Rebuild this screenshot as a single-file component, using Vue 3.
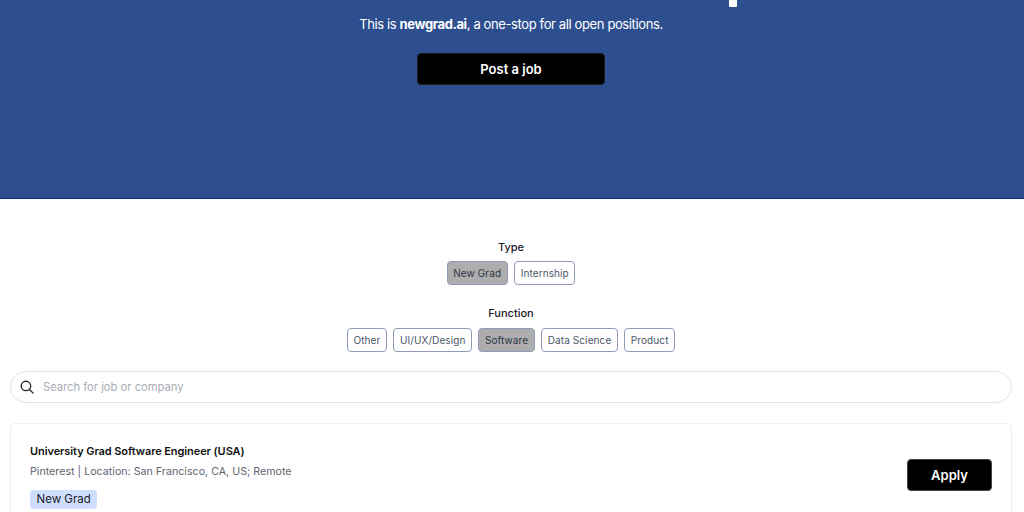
<script setup>
const types = [
  { label: 'New Grad', active: true },
  { label: 'Internship', active: false },
]
const functions = [
  { label: 'Other', active: false },
  { label: 'UI/UX/Design', active: false },
  { label: 'Software', active: true },
  { label: 'Data Science', active: false },
  { label: 'Product', active: false },
]
</script>

<template>
  <div class="page">
    <header class="hero">
      <div class="cursor"></div>
      <p class="intro">This is <b>newgrad.ai</b>, a one-stop for all open positions.</p>
      <button class="post">Post a job</button>
    </header>
    <main class="content">
      <section class="filter">
        <h3>Type</h3>
        <div class="chips">
          <span v-for="t in types" :key="t.label" class="chip" :class="{ active: t.active }">{{ t.label }}</span>
        </div>
      </section>
      <section class="filter second">
        <h3>Function</h3>
        <div class="chips">
          <span v-for="f in functions" :key="f.label" class="chip" :class="{ active: f.active }">{{ f.label }}</span>
        </div>
      </section>
      <div class="search">
        <svg width="14" height="14" viewBox="0 0 16 16" fill="none" stroke="#222" stroke-width="1.5" stroke-linecap="round">
          <circle cx="6.8" cy="6.8" r="5.4" />
          <path d="M10.8 10.8 15 15" />
        </svg>
        <span class="placeholder">Search for job or company</span>
      </div>
      <article class="card">
        <div class="info">
          <div class="title">University Grad Software Engineer (USA)</div>
          <div class="meta">Pinterest | Location: San Francisco, CA, US; Remote</div>
          <span class="tag">New Grad</span>
        </div>
        <button class="apply">Apply</button>
      </article>
    </main>
  </div>
</template>

<style>
html, body { margin: 0; height: 100%; overflow: hidden; background: #fff; }
</style>

<style scoped>
.page {
  width: 1024px;
  height: 512px;
  overflow: hidden;
  font-family: Inter, "Liberation Sans", sans-serif;
}
.hero {
  box-sizing: border-box;
  height: 199px;
  padding-right: 2px;
  background: #2d4f8f;
  border-bottom: 1px solid #0b2a86;
  display: flex;
  flex-direction: column;
  align-items: center;
  position: relative;
  color: #fff;
}
.cursor {
  position: absolute;
  left: 729px;
  top: 0;
  width: 8px;
  height: 7px;
  background: #fff;
  border-radius: 0 0 1px 1px;
}
.intro {
  margin: 16px 0 0;
  font-size: 13px;
  line-height: 17px;
  letter-spacing: -0.38px;
}
.intro b { font-weight: 700; }
.post {
  margin-top: 20px;
  width: 188px;
  height: 32px;
  background: #000;
  color: #fff;
  border: 1px solid #1c1c1c;
  border-radius: 4px;
  font: 600 13px Inter, "Liberation Sans", sans-serif;
  padding: 0;
}
.content { padding: 0 12px 0 10px; }
.filter {
  margin-top: 41px;
  display: flex;
  flex-direction: column;
  align-items: center;
}
.filter.second { margin-top: 21px; }
.filter.second h3 { margin-bottom: 8px; }
h3 {
  margin: 0 0 7px;
  font-size: 11px;
  line-height: 14px;
  font-weight: 500;
  color: #1a202c;
}
.chips { display: flex; gap: 6.5px; }
.chip {
  box-sizing: border-box;
  height: 24px;
  padding: 0 5.5px;
  display: flex;
  align-items: center;
  border: 1px solid #8f9cb8;
  border-radius: 4px;
  font-size: 10px;
  letter-spacing: 0.1px;
  color: #4a5568;
  background: #fff;
}
.chip.active { background: #adadad; color: #2d3748; }
.search {
  box-sizing: border-box;
  margin-top: 19px;
  height: 32px;
  border: 1px solid #dfe3ee;
  border-radius: 16px;
  display: flex;
  align-items: center;
  padding-left: 9px;
  gap: 9px;
}
.placeholder { font-size: 11.2px; color: #a8adb5; }
.card {
  box-sizing: border-box;
  margin-top: 20px;
  height: 120px;
  border: 1px solid #eef0f5;
  border-radius: 4px;
  padding: 20px 19px;
  display: flex;
  justify-content: space-between;
}
.title { font-size: 11px; line-height: 14px; font-weight: 600; color: #111; letter-spacing: -0.08px; }
.meta { margin-top: 7px; font-size: 10.7px; line-height: 14px; color: #5f6670; }
.tag {
  display: inline-block;
  margin-top: 11px;
  height: 19px;
  line-height: 19px;
  padding: 0 6.5px;
  background: #cfdefc;
  border-radius: 4px;
  font-size: 11.5px;
  color: #1a202c;
}
.apply {
  margin-top: 15px;
  width: 85px;
  height: 32px;
  background: #000;
  color: #fff;
  border: 1px solid #444;
  border-radius: 4px;
  font: 600 13px Inter, "Liberation Sans", sans-serif;
  padding: 0;
}
</style>
